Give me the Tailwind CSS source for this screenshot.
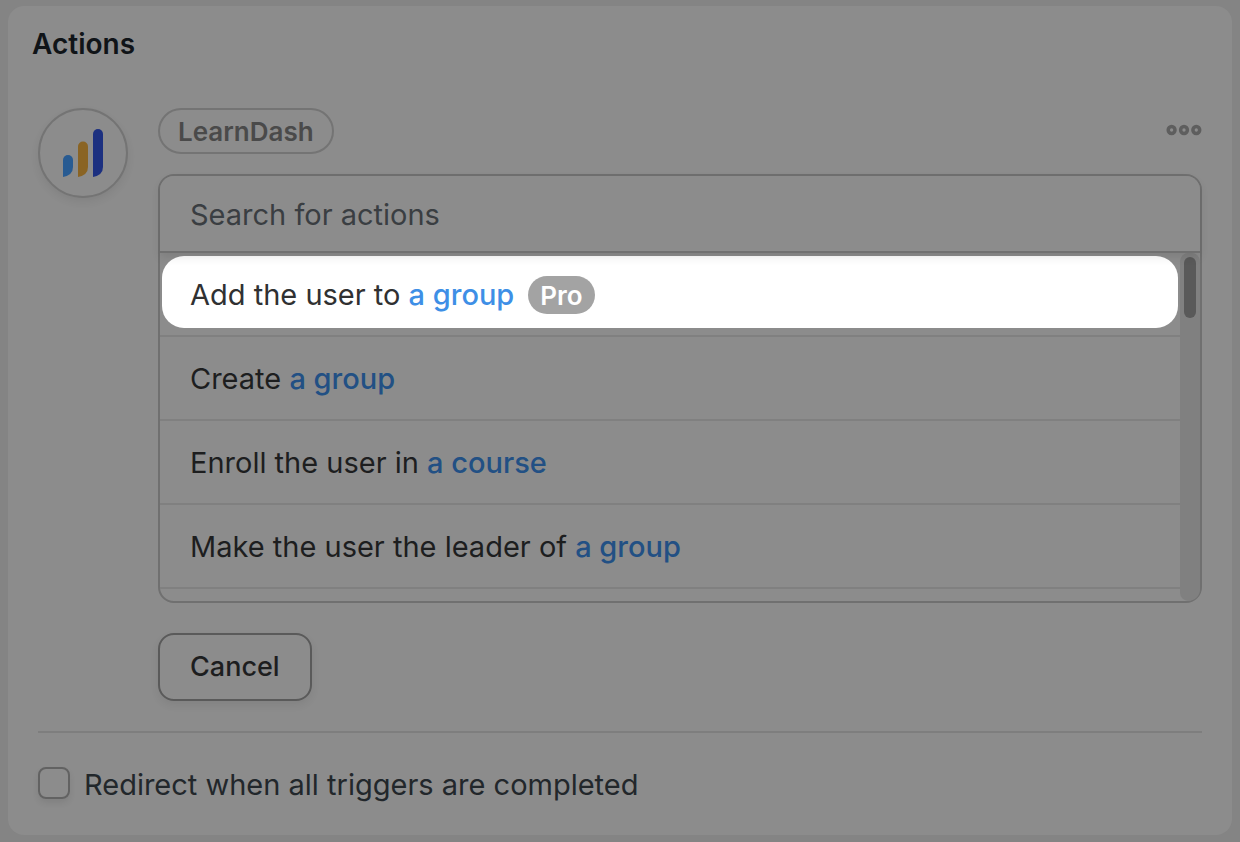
<!DOCTYPE html>
<html lang="en">
<head>
<meta charset="utf-8">
<meta name="viewport" content="width=device-width, initial-scale=1">
<title>Actions</title>
<script src="https://cdn.jsdelivr.net/npm/@tailwindcss/browser@4"></script>
</head>
<body class="min-h-screen bg-[#848484] px-2 pt-1.5 pb-[7px] font-['Inter','Liberation_Sans',sans-serif] text-[29px] leading-9 text-[#1d1e1f]">
<main class="rounded-2xl bg-[#8c8c8c] pb-8">
  <h1 class="px-6 pt-5 text-[28px] leading-9 font-semibold text-[#101418]">Actions</h1>

  <section class="mt-[46px] flex gap-[30px] px-[30px]">
    <div class="flex size-[90px] shrink-0 items-center justify-center rounded-full border-2 border-[#747474] shadow-[0_4px_8px_rgba(0,0,0,0.07)]">
      <svg class="h-12 w-10" viewBox="0 0 40 48" role="img" aria-label="LearnDash logo">
        <path fill="#285b92" d="M0 48V31a5 5 0 0 1 10 0V38Q10 46 0 48Z"/>
        <path fill="#8a6424" d="M15 48V17.500a5 5 0 0 1 10 0V38Q25 46 15 48Z"/>
        <path fill="#1c3080" d="M30 48V5a5 5 0 0 1 10 0V38Q40 46 30 48Z"/>
      </svg>
    </div>

    <div class="min-w-0 flex-1">
      <div class="flex items-center justify-between">
        <span class="rounded-full border-2 border-[#747474] px-[18px] pt-1 pb-0.5 text-[26px] leading-9 font-semibold text-[#4a4a4a]">LearnDash</span>
        <button type="button" aria-label="More options" class="pb-0.5">
          <svg class="h-3 w-9" viewBox="0 0 36 12" fill="none" stroke="#5e5e5e" stroke-width="3.500">
            <circle cx="5.600" cy="6" r="3.400"/><circle cx="18" cy="6" r="3.400"/><circle cx="30.300" cy="6" r="3.400"/>
          </svg>
        </button>
      </div>

      <div class="mt-5 rounded-2xl border-2 border-[#707070]">
        <input type="text" aria-label="Search for actions" placeholder="Search for actions" class="relative block h-[77px] w-full rounded-t-[14px] border-b-2 border-[#707070] bg-[#8c8c8c] px-[30px] pt-0.5 shadow-[0_4px_10px_rgba(0,0,0,0.1)] outline-none placeholder:text-[#3a3e42] placeholder:opacity-100">
        <div class="flex h-[348px]">
          <ul class="min-w-0 flex-1">
            <li class="h-[84px] border-b-2 border-[#808080] px-0.5 pt-[3px]">
              <button type="button" class="flex h-[72px] w-full items-center rounded-[22px] bg-white px-7 pt-1.5 text-left text-[#303132]">
                <span>Add the user to <span class="font-medium text-[#3e8fe6]">a group</span></span>
                <span class="ml-3.5 rounded-full bg-[#a3a3a3] px-3 pt-0.5 text-[26px] leading-9 font-semibold text-white">Pro</span>
              </button>
            </li>
            <li class="h-[84px] border-b-2 border-[#808080]">
              <button type="button" class="h-full w-full px-[30px] pt-0.5 text-left">Create <span class="font-medium text-[#225084]">a group</span></button>
            </li>
            <li class="h-[84px] border-b-2 border-[#808080]">
              <button type="button" class="h-full w-full px-[30px] pt-0.5 text-left">Enroll the user in <span class="font-medium text-[#225084]">a course</span></button>
            </li>
            <li class="h-[84px] border-b-2 border-[#808080]">
              <button type="button" class="h-full w-full px-[30px] pt-0.5 text-left">Make the user the leader of <span class="font-medium text-[#225084]">a group</span></button>
            </li>
          </ul>
          <div class="w-5 rounded-[10px] rounded-br-[14px] bg-[#808080] px-1 pt-1">
            <div class="h-[61px] rounded-full bg-[#595959]"></div>
          </div>
        </div>
      </div>

      <button type="button" class="mt-[30px] block rounded-2xl border-2 border-[#5a5a5a] px-[30px] py-3.5 text-[27px] leading-9 font-medium shadow-[0_4px_8px_rgba(0,0,0,0.07)]">Cancel</button>
    </div>
  </section>

  <hr class="mx-[30px] mt-[30px] border-t-2 border-[#7e7e7e]">
  <div class="mt-[34px] flex items-start gap-3.5 px-[30px]">
    <input id="redirect" type="checkbox" class="size-8 appearance-none rounded-lg border-2 border-[#626262] shadow-[0_4px_6px_rgba(0,0,0,0.08)] checked:bg-[#225084]">
    <label for="redirect" class="text-[#22272b]">Redirect when all triggers are completed</label>
  </div>
</main>
</body>
</html>
